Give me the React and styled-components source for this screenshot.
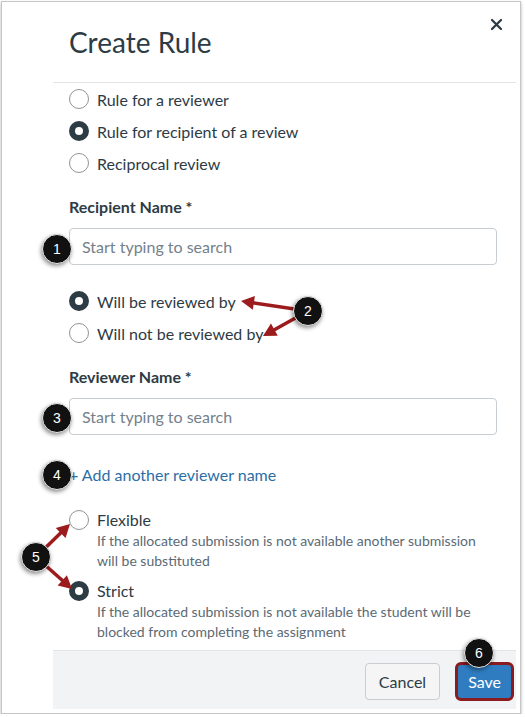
import React from "react";
import styled, { createGlobalStyle } from "styled-components";

const GlobalStyle = createGlobalStyle`
  body {
    margin: 0;
    background: #fff;
    font-family: Lato, "Noto Sans", sans-serif;
    color: #2d3b45;
  }
`;

const Frame = styled.div`
  position: relative;
  box-sizing: border-box;
  width: 520px;
  height: 713px;
  margin: 1px 0 0 1px;
  border: 1px solid #c6c6c6;
  box-shadow: 0 2px 3px rgba(0, 0, 0, 0.3);
  padding: 0 4px 4px 51px;
  display: flex;
  background: #fff;
`;

const Modal = styled.div`
  flex: 1;
  display: flex;
  flex-direction: column;
`;

const Header = styled.div`
  box-sizing: border-box;
  height: 81px;
  border-bottom: 1px solid #e2e4e6;
  display: flex;
  justify-content: space-between;
  padding: 0 13px 0 16px;
`;

const Title = styled.h1`
  margin: 0;
  font-size: 28px;
  font-weight: 400;
  line-height: 81px;
  color: #2d3b45;
`;

const Close = styled.button`
  border: 0;
  background: none;
  padding: 0;
  margin-top: 16px;
  width: 13px;
  height: 13px;
  display: flex;
`;

const Body = styled.div`
  padding: 4px 19px 0 16px;
  display: flex;
  flex-direction: column;
`;

const Group = styled.div`
  display: flex;
  flex-direction: column;
  gap: 8px;
  margin-top: ${(p) => p.$top || 0}px;
`;

const RadioRow = styled.label`
  display: flex;
  align-items: center;
  gap: 8px;
  height: 24px;
  font-size: 16px;
`;

const Radio = styled.span`
  box-sizing: border-box;
  flex: none;
  width: 20px;
  height: 20px;
  border-radius: 50%;
  background: #fff;
  border: ${(p) => (p.$on ? "6px solid #2d3b45" : "1px solid #8d959b")};
`;

const FieldLabel = styled.div`
  margin-top: 20px;
  font-size: 16px;
  font-weight: 700;
  line-height: 24px;
`;

const Input = styled.input`
  box-sizing: border-box;
  margin-top: 9px;
  width: 100%;
  height: 37px;
  border: 1px solid #c7cdd1;
  border-radius: 4px;
  padding: 0 12px;
  font-family: inherit;
  font-size: 16px;
  color: #2d3b45;
  outline: none;
  &::placeholder {
    color: #73818c;
  }
`;

const AddLink = styled.a`
  margin-top: 28px;
  font-size: 16px;
  line-height: 24px;
  color: #2d6ea6;
  text-decoration: none;
`;

const Option = styled.div`
  display: grid;
  grid-template-columns: 20px 1fr;
  column-gap: 8px;
  margin-top: ${(p) => p.$top}px;
  & > ${Radio} {
    margin-top: 1px;
  }
`;

const OptionTitle = styled.div`
  font-size: 16px;
  line-height: 22px;
`;

const OptionHint = styled.div`
  font-size: 14px;
  line-height: 20px;
  color: #5b6a75;
`;

const Footer = styled.div`
  box-sizing: border-box;
  margin-top: auto;
  height: 59px;
  background: #f2f3f4;
  border-top: 1px solid #e2e4e6;
  display: flex;
  justify-content: flex-end;
  align-items: center;
  gap: 15px;
  padding: 2px 2px 0 0;
`;

const Button = styled.button`
  box-sizing: border-box;
  height: ${(p) => (p.$primary ? 39 : 37)}px;
  padding: 0 ${(p) => (p.$primary ? 10 : 13)}px;
  border-radius: ${(p) => (p.$primary ? 6 : 4)}px;
  border: ${(p) => (p.$primary ? "3px solid #8a1c1f" : "1px solid #c7cdd1")};
  background: ${(p) => (p.$primary ? "#2f7dc0" : "#f5f5f5")};
  color: ${(p) => (p.$primary ? "#fff" : "#2d3b45")};
  font-family: inherit;
  font-size: 16px;
`;

const Overlay = styled.svg`
  position: absolute;
  left: -2px;
  top: -2px;
  pointer-events: none;
`;

const Badge = styled.div`
  position: absolute;
  box-sizing: border-box;
  width: 30px;
  height: 30px;
  border-radius: 50%;
  background: #111;
  border: 1.5px solid #e8e8e8;
  box-shadow: -1px 2px 4px rgba(0, 0, 0, 0.45);
  color: #fff;
  font-family: "Liberation Sans", Arial, sans-serif;
  font-size: 14px;
  display: flex;
  align-items: center;
  justify-content: center;
`;

const badges = [
  { n: 1, x: 57, y: 249 },
  { n: 2, x: 308, y: 311 },
  { n: 3, x: 57, y: 418 },
  { n: 4, x: 57, y: 475 },
  { n: 5, x: 36, y: 557 },
  { n: 6, x: 479, y: 653 },
];

const arrows = [
  [308, 311, 241, 301],
  [308, 311, 263, 336],
  [36, 557, 70, 524],
  [36, 557, 72, 589],
];

function Arrow({ from, to }) {
  const [x1, y1] = from;
  const [x2, y2] = to;
  const dx = x2 - x1;
  const dy = y2 - y1;
  const len = Math.hypot(dx, dy);
  const ux = dx / len;
  const uy = dy / len;
  const hl = 13;
  const hw = 7;
  const bx = x2 - ux * hl;
  const by = y2 - uy * hl;
  const pts = `${x2},${y2} ${bx - uy * hw},${by + ux * hw} ${bx + uy * hw},${by - ux * hw}`;
  return (
    <g>
      <line x1={x1} y1={y1} x2={bx + ux} y2={by + uy} stroke="#9c1b1d" strokeWidth="3.5" />
      <polygon points={pts} fill="#9c1b1d" />
    </g>
  );
}

export default function App() {
  return (
    <>
      <GlobalStyle />
      <Frame>
        <Modal>
          <Header>
            <Title>Create Rule</Title>
            <Close aria-label="Close">
              <svg width="13" height="13" viewBox="0 0 13 13">
                <path d="M2 2 L11 11 M11 2 L2 11" stroke="#2d3b45" strokeWidth="2.3" strokeLinecap="round" />
              </svg>
            </Close>
          </Header>
          <Body>
            <Group>
              <RadioRow><Radio />Rule for a reviewer</RadioRow>
              <RadioRow><Radio $on />Rule for recipient of a review</RadioRow>
              <RadioRow><Radio />Reciprocal review</RadioRow>
            </Group>
            <FieldLabel>Recipient Name *</FieldLabel>
            <Input placeholder="Start typing to search" readOnly />
            <Group $top={24}>
              <RadioRow><Radio $on />Will be reviewed by</RadioRow>
              <RadioRow><Radio />Will not be reviewed by</RadioRow>
            </Group>
            <FieldLabel>Reviewer Name *</FieldLabel>
            <Input placeholder="Start typing to search" readOnly />
            <AddLink href="#">+ Add another reviewer name</AddLink>
            <Option $top={22}>
              <Radio />
              <OptionTitle>Flexible</OptionTitle>
              <span />
              <OptionHint>
                If the allocated submission is not available another submission will be substituted
              </OptionHint>
            </Option>
            <Option $top={9}>
              <Radio $on />
              <OptionTitle>Strict</OptionTitle>
              <span />
              <OptionHint>
                If the allocated submission is not available the student will be blocked from completing the assignment
              </OptionHint>
            </Option>
          </Body>
          <Footer>
            <Button>Cancel</Button>
            <Button $primary>Save</Button>
          </Footer>
        </Modal>
        <Overlay width="525" height="717" viewBox="0 0 525 717">
          {arrows.map(([a, b, c, d], i) => (
            <Arrow key={i} from={[a, b]} to={[c, d]} />
          ))}
        </Overlay>
        {badges.map((b) => (
          <Badge key={b.n} style={{ left: b.x - 17, top: b.y - 17 }}>
            {b.n}
          </Badge>
        ))}
      </Frame>
    </>
  );
}
